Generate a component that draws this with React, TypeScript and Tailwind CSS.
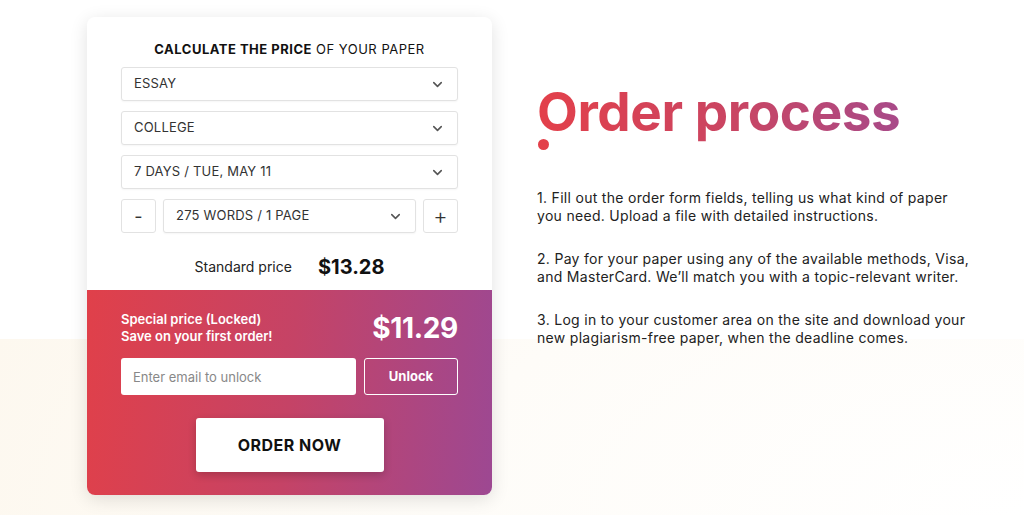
import React from "react";
import { ChevronDown } from "lucide-react";

const Select = ({ label, className = "" }: { label: string; className?: string }) => (
  <div
    className={`flex items-center justify-between h-[34px] px-3 bg-white border border-[#e2e2e2] rounded-[3px] shadow-[0_1px_2px_rgba(0,0,0,0.04)] ${className}`}
  >
    <span className="text-[13px] text-[#333] tracking-[0.2px]">{label}</span>
    <ChevronDown size={15} strokeWidth={2.5} className="text-[#555]" />
  </div>
);

const steps = [
  ["1. Fill out the order form fields, telling us what kind of paper", "you need. Upload a file with detailed instructions."],
  ["2. Pay for your paper using any of the available methods, Visa,", "and MasterCard. We\u2019ll match you with a topic-relevant writer."],
  ["3. Log in to your customer area on the site and download your", "new plagiarism-free paper, when the deadline comes."],
];

const App = () => {
  return (
    <div
      className="w-[1024px] h-[515px] overflow-hidden flex items-start font-['Inter',sans-serif] bg-[linear-gradient(to_bottom,#ffffff_339px,transparent_339px),radial-gradient(ellipse_at_100%_100%,#ffffff_0%,#fefcf8_40%,#fdf8ef_75%)]"
    >
      {/* calculator card */}
      <div className="ml-[87px] mt-[17px] w-[405px] rounded-[8px] overflow-hidden bg-white shadow-[0_4px_18px_rgba(0,0,0,0.12)]">
        <div className="px-[34px] pt-[23px] pb-[11px]">
          <h2 className="text-center text-[13px] leading-[18px] text-[#111] tracking-[0.5px] mb-[9px]">
            <span className="font-bold">CALCULATE THE PRICE</span> OF YOUR PAPER
          </h2>
          <div className="flex flex-col gap-[10px]">
            <Select label="ESSAY" />
            <Select label="COLLEGE" />
            <Select label="7 DAYS / TUE, MAY 11" />
            <div className="flex gap-[7px]">
              <button className="w-[35px] h-[34px] bg-white border border-[#e2e2e2] rounded-[3px] text-[18px] text-[#333] flex items-center justify-center">
                -
              </button>
              <Select label="275 WORDS / 1 PAGE" className="flex-1" />
              <button className="w-[35px] h-[34px] bg-white border border-[#e2e2e2] rounded-[3px] text-[22px] font-light text-[#333] flex items-center justify-center">
                +
              </button>
            </div>
          </div>
          <div className="flex items-center justify-center gap-[26px] mt-[22px] leading-[24px]">
            <span className="text-[14px] text-[#222]">Standard price</span>
            <span className="text-[20px] font-bold text-[#111]">$13.28</span>
          </div>
        </div>

        {/* special price */}
        <div className="bg-[linear-gradient(95deg,#e0404a_0%,#c54366_50%,#9d4892_100%)] px-[34px] pt-[21px] pb-[23px]">
          <div className="flex items-center justify-between">
            <div className="text-white text-[13px] font-semibold leading-[17px]">
              <div>Special price (Locked)</div>
              <div>Save on your first order!</div>
            </div>
            <div className="text-white text-[28px] leading-[34px] font-bold tracking-[-0.3px]">$11.29</div>
          </div>
          <div className="flex gap-[8px] mt-[13px]">
            <input
              placeholder="Enter email to unlock"
              className="flex-1 h-[37px] rounded-[3px] bg-white px-3 text-[13px] text-[#333] placeholder:text-[#888] outline-none"
            />
            <button className="w-[94px] h-[37px] rounded-[3px] border-[1.5px] border-white text-white text-[13px] font-bold">
              Unlock
            </button>
          </div>
          <div className="flex justify-center mt-[23px]">
            <button className="w-[188px] h-[54px] bg-white rounded-[3px] text-[16px] font-bold text-[#111] tracking-[0.5px] shadow-[0_3px_8px_rgba(0,0,0,0.2)]">
              ORDER NOW
            </button>
          </div>
        </div>
      </div>

      {/* order process */}
      <div className="ml-[45px] mt-[78px]">
        <div className="relative">
          <h1 className="text-[53px] font-bold leading-[68px] tracking-[-0.4px] bg-[linear-gradient(90deg,#e3404a_0%,#c94563_55%,#a84a89_100%)] bg-clip-text text-transparent w-max">
            Order process
          </h1>
          <div className="w-[11px] h-[11px] rounded-full bg-[#e3404a] ml-[1px] mt-[-7px]" />
        </div>
        <div className="mt-[39px] flex flex-col gap-[25px] text-[14px] leading-[18px] text-[#222] tracking-[0.3px]">
          {steps.map((s, i) => (
            <p key={i}>
              {s[0]}
              <br />
              {s[1]}
            </p>
          ))}
        </div>
      </div>
    </div>
  );
};

export default App;
